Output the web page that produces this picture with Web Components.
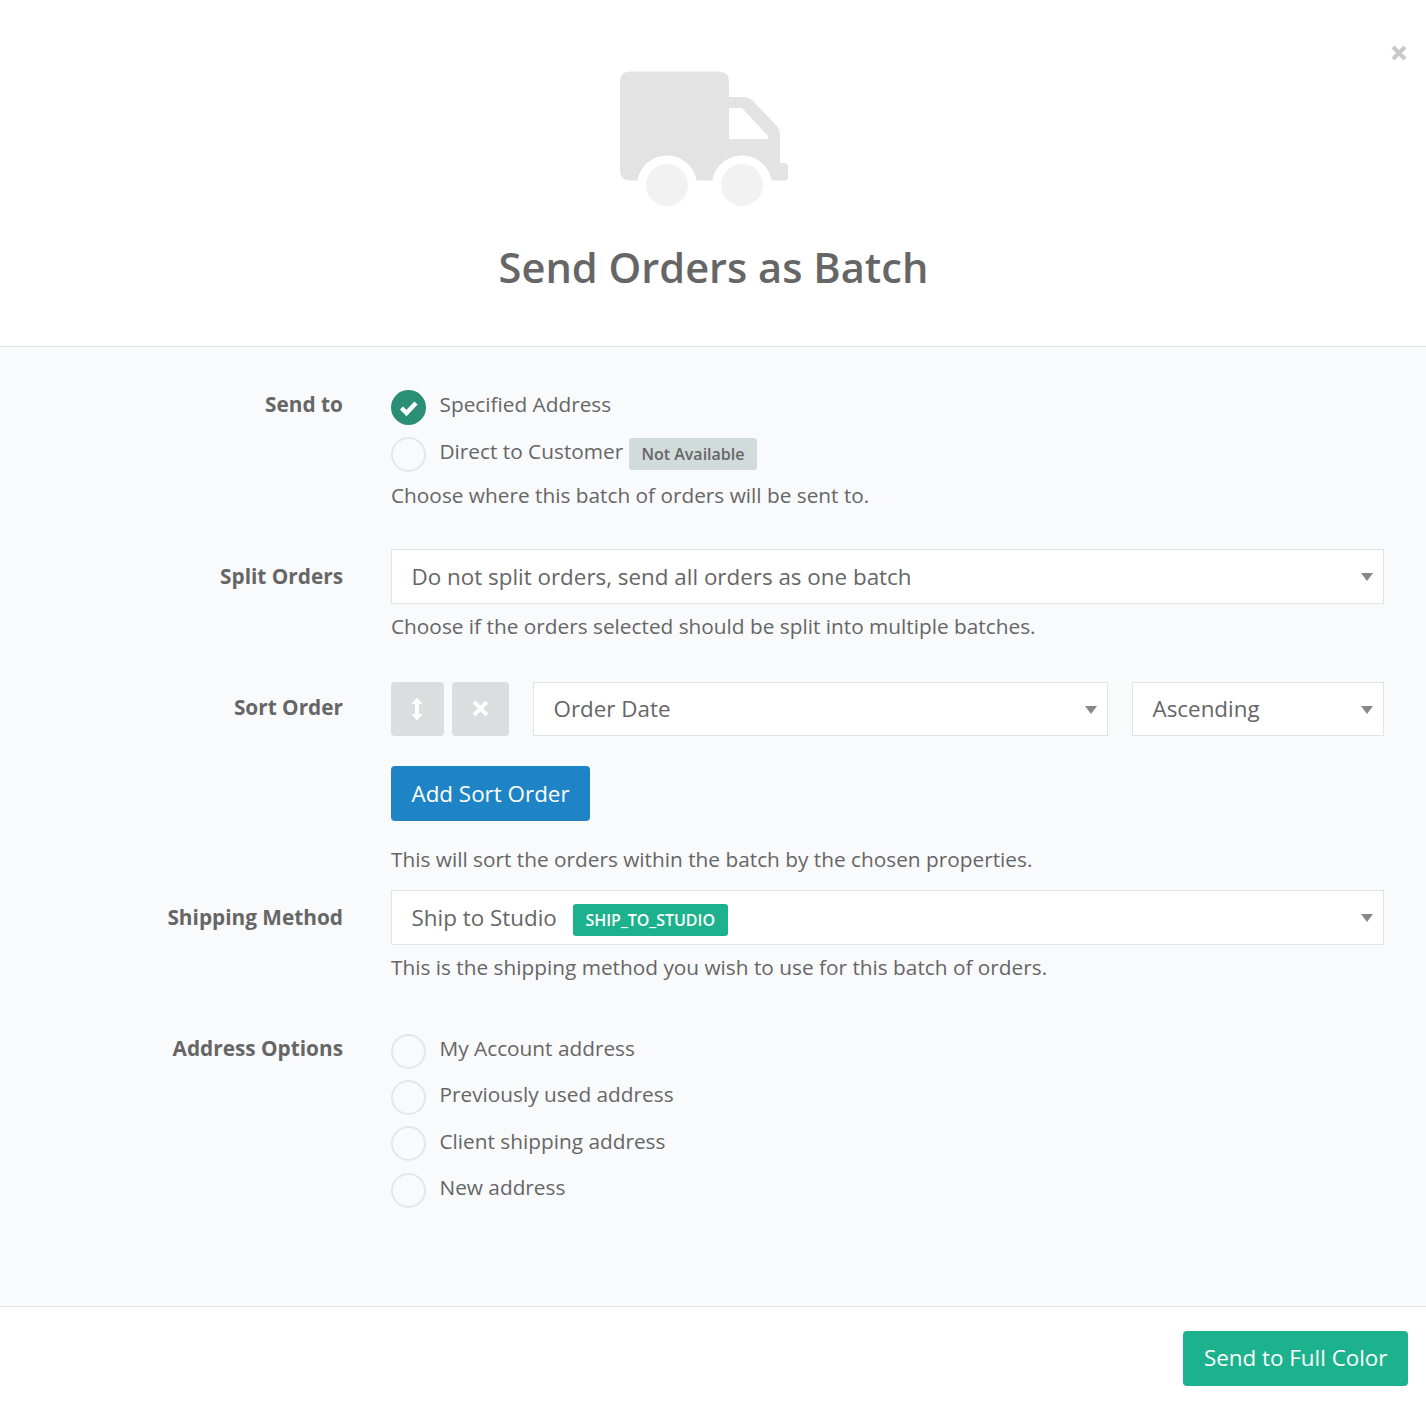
<!DOCTYPE html>
<html>
<head>
<meta charset="utf-8">
<style>
html, body { margin: 0; padding: 0; background: #fff; }
body { font-family: "Open Sans", sans-serif; color: #666; }
</style>
</head>
<body>
<batch-modal>
  <form-row label="Send to" style="--row-top:37px;--label-top:4.5px">
    <radio-opt checked>Specified Address</radio-opt>
    <radio-opt style="margin-top:1px">Direct to Customer <ui-tag>Not Available</ui-tag></radio-opt>
    <help-text style="--help-top:2.4px">Choose where this batch of orders will be sent to.</help-text>
  </form-row>
  <form-row label="Split Orders" style="--row-top:39px;--label-top:12px">
    <select-box>Do not split orders, send all orders as one batch</select-box>
    <help-text>Choose if the orders selected should be split into multiple batches.</help-text>
  </form-row>
  <form-row label="Sort Order" style="--row-top:41px;--label-top:10px">
    <sort-line></sort-line>
    <add-button>Add Sort Order</add-button>
    <help-text style="--help-top:23px">This will sort the orders within the batch by the chosen properties.</help-text>
  </form-row>
  <form-row label="Shipping Method" style="--row-top:16px;--label-top:12px">
    <select-box>Ship to Studio <ui-tag green style="margin-left:10px">SHIP_TO_STUDIO</ui-tag></select-box>
    <help-text>This is the shipping method you wish to use for this batch of orders.</help-text>
  </form-row>
  <form-row label="Address Options" style="--row-top:46px;--label-top:5px">
    <radio-opt>My Account address</radio-opt>
    <radio-opt>Previously used address</radio-opt>
    <radio-opt>Client shipping address</radio-opt>
    <radio-opt>New address</radio-opt>
  </form-row>
</batch-modal>

<script>
class BatchModal extends HTMLElement {
  connectedCallback() {
    this.attachShadow({mode: "open"}).innerHTML = `
    <style>
      :host { display: block; width: 1426px; height: 1404px; background: #fff; position: relative; font-family: "Open Sans", sans-serif; }
      header { height: 346px; box-sizing: border-box; display: flex; flex-direction: column; align-items: center; padding-top: 70px; }
      header svg { display: block; margin-left: -18px; }
      h1 { margin: 31px 0 0; padding-left: 1px; font-size: 41.6px; line-height: 58px; font-weight: 600; color: #666; }
      main { height: 961px; box-sizing: border-box; background: #f9fafc; border-top: 1px solid #e2e3e5; border-bottom: 1px solid #e2e3e5; }
      footer { display: flex; justify-content: flex-end; padding: 24px 18px 0 0; }
      .send { background: #1cb28e; color: #fff; font-size: 22.4px; line-height: 53px; height: 55px; padding: 0 20.5px; border-radius: 4px; box-sizing: border-box; }
      .close { position: absolute; right: 19px; top: 44px; width: 16px; height: 18px; }
    </style>
    <svg class="close" viewBox="0 0 16 18"><path d="M2 3 14 15M14 3 2 15" stroke="#c9c9c9" stroke-width="4" fill="none"/></svg>
    <header>
      <svg width="170" height="137" viewBox="0 0 170 137">
        <path fill="#e3e3e3" d="M11 1.5H100Q110 1.5 110 11.5V27H124Q130 27 134 31L156 54Q161 59 161 65V93H165Q169 93 169 97V107Q169 110.5 165 110.5H152.6A30 30 0 0 0 93.4 110.5H77.6A30 30 0 0 0 18.4 110.5H11Q1 110.5 1 100V11.5Q1 1.5 11 1.5Z"/>
        <path fill="#fff" d="M110 38H123L149 66V69H110Z"/>
        <circle cx="48" cy="115" r="21" fill="#f2f2f2"/>
        <circle cx="123" cy="115" r="21" fill="#f2f2f2"/>
      </svg>
      <h1>Send Orders as Batch</h1>
    </header>
    <main><slot></slot></main>
    <footer><div class="send">Send to Full Color</div></footer>`;
  }
}

class FormRow extends HTMLElement {
  connectedCallback() {
    this.attachShadow({mode: "open"}).innerHTML = `
    <style>
      :host { display: grid; grid-template-columns: 343px 993px; column-gap: 48px; margin-top: var(--row-top, 0); }
      .label { text-align: right; font-size: 20.8px; font-weight: 700; line-height: 30px; color: #666; padding-top: var(--label-top, 0); }
      .control { display: flex; flex-direction: column; align-items: stretch; min-width: 0; }
    </style>
    <div class="label">${this.getAttribute("label")}</div>
    <div class="control"><slot></slot></div>`;
  }
}

class RadioOpt extends HTMLElement {
  connectedCallback() {
    const on = this.hasAttribute("checked");
    this.attachShadow({mode: "open"}).innerHTML = `
    <style>
      :host { display: flex; align-items: center; height: 46.3px; font-size: 20.8px; color: #666; }
      .dot { flex: none; width: 35px; height: 35px; box-sizing: border-box; border-radius: 50%; border: 2px solid #e5e6e6; margin-right: 13.5px; }
      .dot.on { border: 0; background: #2b8f76; }
      .dot svg { display: block; }
      .txt { position: relative; top: -3px; display: flex; align-items: center; white-space: pre; }
    </style>
    <div class="dot ${on ? "on" : ""}">${on ? '<svg width="35" height="35" viewBox="0 0 35 35"><path d="M10.5 18 15.5 23 25 13" stroke="#fff" stroke-width="4.5" fill="none"/></svg>' : ""}</div>
    <div class="txt"><slot></slot></div>`;
  }
}

class UiTag extends HTMLElement {
  connectedCallback() {
    const green = this.hasAttribute("green");
    this.attachShadow({mode: "open"}).innerHTML = `
    <style>
      :host { display: inline-block; height: 32px; line-height: 32px; padding: 0 12.8px; border-radius: 3px; font-size: 16px; font-weight: 600; position: relative; top: 3px;
        background: ${green ? "#1cb28e" : "#d2dbdc"}; color: ${green ? "#fff" : "#666"}; white-space: nowrap; }
    </style><slot></slot>`;
  }
}

class HelpText extends HTMLElement {
  connectedCallback() {
    this.attachShadow({mode: "open"}).innerHTML = `
    <style>
      :host { display: block; font-size: 20.8px; line-height: 30px; color: #666; margin-top: var(--help-top, 7px); white-space: nowrap; }
    </style><slot></slot>`;
  }
}

class SelectBox extends HTMLElement {
  connectedCallback() {
    this.attachShadow({mode: "open"}).innerHTML = `
    <style>
      :host { display: flex; align-items: center; height: 55px; box-sizing: border-box; background: #fff; border: 1px solid #e2e3e5; padding-left: 19.5px; font-size: 22.4px; color: #666; position: relative; flex: var(--box-flex, none); width: var(--box-width, auto); white-space: pre; }
      .arrow { position: absolute; right: 10.5px; top: 50%; margin-top: -3px; width: 0; height: 0; border-left: 6.5px solid transparent; border-right: 6.5px solid transparent; border-top: 8px solid #888; }
    </style><slot></slot><div class="arrow"></div>`;
  }
}

class SortLine extends HTMLElement {
  connectedCallback() {
    this.attachShadow({mode: "open"}).innerHTML = `
    <style>
      :host { display: flex; height: 54px; }
      .btn { background: #dcdddf; border-radius: 4px; height: 54px; display: flex; align-items: center; justify-content: center; }
      select-box { height: 54px; }
    </style>
    <div class="btn" style="width:53px"><svg width="12" height="24" viewBox="0 0 12 24" style="margin-right:1px"><path fill="#fff" d="M6 .5 11.5 7H8V17H11.5L6 23.5 .5 17H4V7H.5Z"/></svg></div>
    <div class="btn" style="width:57px;margin-left:8px"><svg width="17" height="17" viewBox="0 0 17 17"><path d="M2 2 15 15M15 2 2 15" stroke="#fff" stroke-width="4" fill="none"/></svg></div>
    <select-box style="--box-width:575px;margin-left:24px">Order Date</select-box>
    <select-box style="--box-width:252px;margin-left:24px">Ascending</select-box>`;
  }
}

class AddButton extends HTMLElement {
  connectedCallback() {
    this.attachShadow({mode: "open"}).innerHTML = `
    <style>
      :host { display: block; align-self: flex-start; margin-top: 30px; height: 55px; line-height: 55px; padding: 0 20.5px; background: #1f84c6; color: #fff; font-size: 22.4px; border-radius: 4px; }
    </style><slot></slot>`;
  }
}

customElements.define("batch-modal", BatchModal);
customElements.define("form-row", FormRow);
customElements.define("radio-opt", RadioOpt);
customElements.define("ui-tag", UiTag);
customElements.define("help-text", HelpText);
customElements.define("select-box", SelectBox);
customElements.define("sort-line", SortLine);
customElements.define("add-button", AddButton);
</script>
</body>
</html>
